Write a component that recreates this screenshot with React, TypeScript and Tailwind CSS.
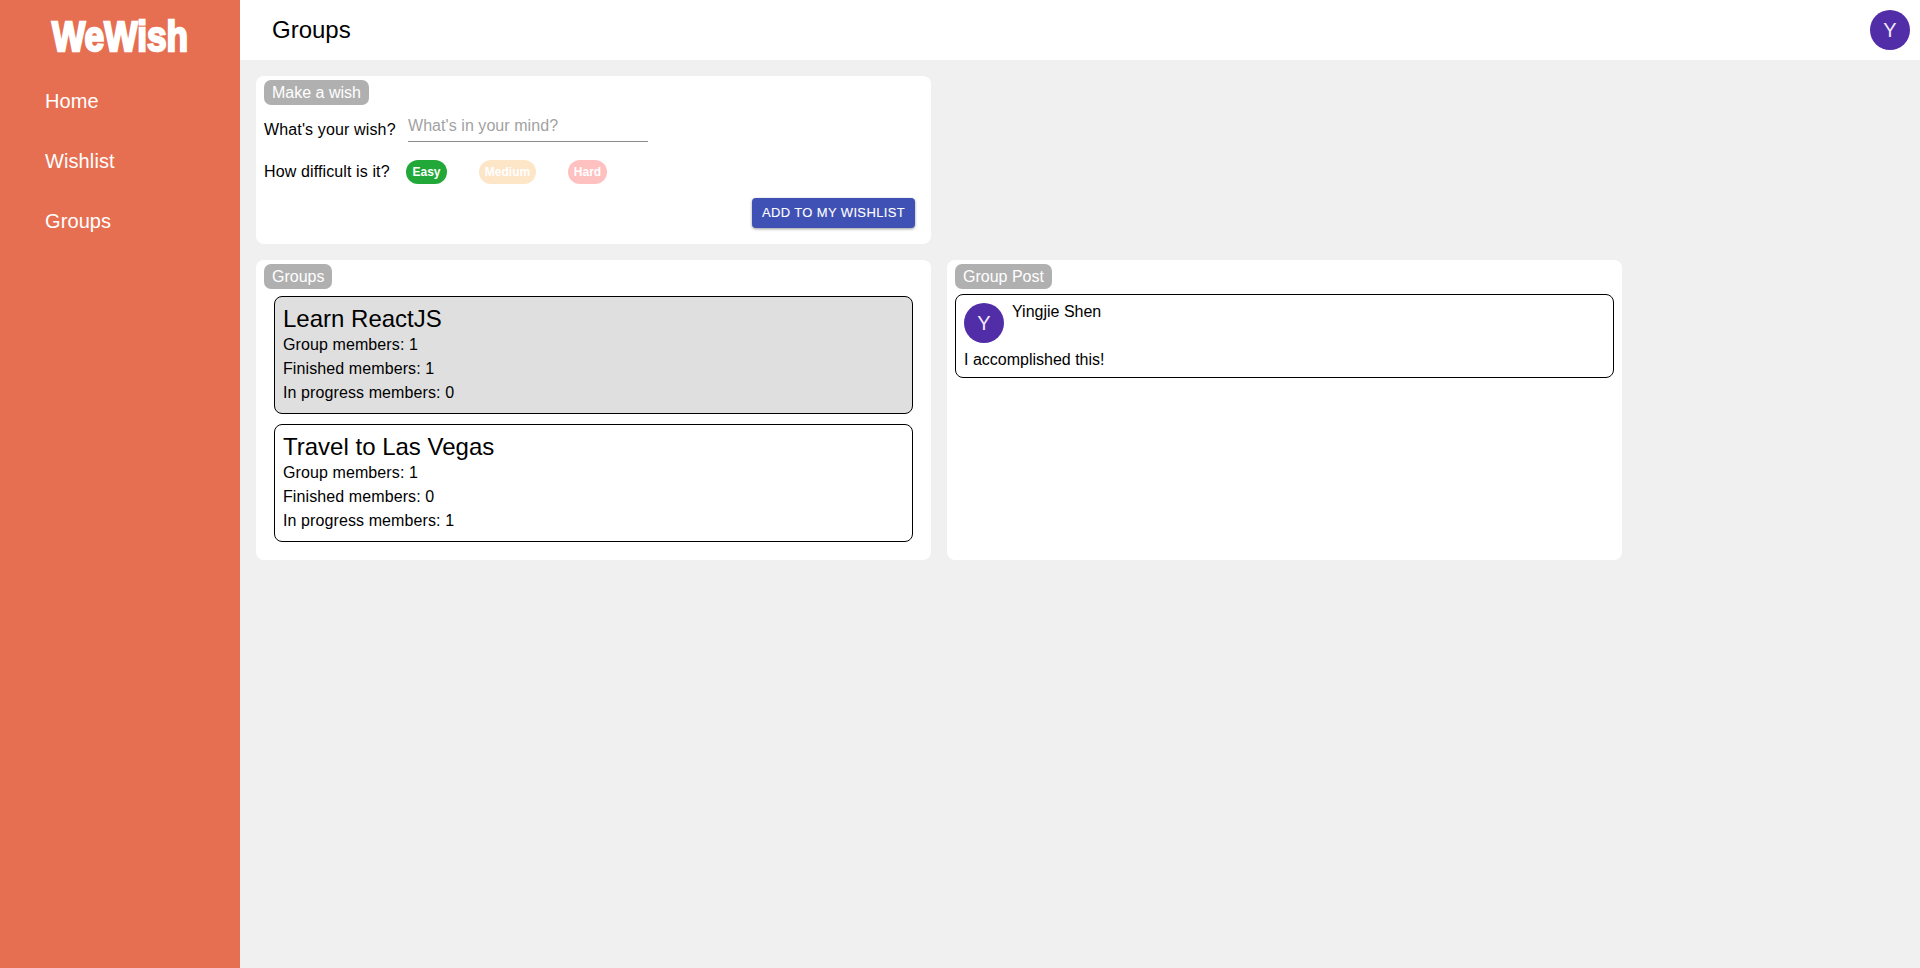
const font = "font-['Liberation_Sans',Arial,sans-serif]";

function Badge({ children }: { children: React.ReactNode }) {
  return (
    <div className="w-fit h-[25px] rounded-[7px] bg-[#b0b0b0] px-2 text-base leading-[25px] text-white">
      {children}
    </div>
  );
}

function Avatar() {
  return (
    <div className="flex h-10 w-10 shrink-0 items-center justify-center rounded-full bg-[#512da8] text-xl text-[#f0e9fa]">
      Y
    </div>
  );
}

function Chip({ label, className }: { label: string; className: string }) {
  return (
    <div className={`flex h-6 items-center justify-center rounded-full text-xs font-bold text-white ${className}`}>
      {label}
    </div>
  );
}

function GroupCard({ title, members, finished, progress, active }: { title: string; members: number; finished: number; progress: number; active?: boolean }) {
  return (
    <div className={`h-[118px] w-[639px] rounded-lg border border-black pl-2 pt-[7px] ${active ? "bg-[#dfdfdf]" : "bg-white"}`}>
      <div className="text-2xl leading-[29px] text-black">{title}</div>
      <div className="text-base leading-6 tracking-[0.1px] text-black">Group members: {members}</div>
      <div className="text-base leading-6 tracking-[0.1px] text-black">Finished members: {finished}</div>
      <div className="text-base leading-6 tracking-[0.1px] text-black">In progress members: {progress}</div>
    </div>
  );
}

export default function App() {
  return (
    <div className={`flex min-h-screen bg-[#f0f0f0] ${font}`}>
      <aside className="w-[240px] shrink-0 bg-[#e76f51]">
        <div className="flex h-[71px] items-center justify-center pt-[2px]">
          <span className="scale-x-[0.82] text-[43px] font-bold leading-none text-white [-webkit-text-stroke:2.4px_white]">
            WeWish
          </span>
        </div>
        <nav className="flex flex-col">
          {["Home", "Wishlist", "Groups"].map((n) => (
            <div key={n} className="flex h-[60px] items-center pl-[45px] text-xl tracking-[0.1px] text-white">
              {n}
            </div>
          ))}
        </nav>
      </aside>
      <main className="flex min-w-0 flex-1 flex-col">
        <header className="flex h-[60px] items-center justify-between bg-white pl-[32px] pr-[10px]">
          <h1 className="text-2xl text-black">Groups</h1>
          <Avatar />
        </header>
        <div className="flex flex-col gap-4 p-4">
          <section className="h-[168px] w-[675px] rounded-lg bg-white px-2 pt-1">
            <Badge>Make a wish</Badge>
            <div className="mt-[6px] flex items-end">
              <label className="w-[144px] text-base leading-6 tracking-[0.14px] text-black">What's your wish?</label>
              <input
                readOnly
                placeholder="What's in your mind?"
                className="h-[31px] w-[240px] border-b border-[#8c8c8c] pb-[1px] text-base tracking-[0.06px] text-black outline-none placeholder:text-[#a2a2a2]"
              />
            </div>
            <div className="mt-[18px] flex items-center">
              <div className="w-[142px] text-base leading-6 tracking-[0.12px] text-black">How difficult is it?</div>
              <div className="flex gap-8">
                <Chip label="Easy" className="w-[41px] bg-[#22a838]" />
                <Chip label="Medium" className="w-[57px] bg-[#fde5c8]" />
                <Chip label="Hard" className="w-[39px] bg-[#ffc0c0]" />
              </div>
            </div>
            <div className="mt-[14px] flex justify-end pr-2">
              <button className="h-[30px] w-[163px] rounded bg-[#3f51b5] text-[13px] font-medium tracking-[0.37px] text-white shadow-[0_1px_3px_rgba(0,0,0,0.4)] [-webkit-text-stroke:0.1px_white]">
                ADD TO MY WISHLIST
              </button>
            </div>
          </section>
          <div className="flex gap-4">
            <section className="h-[300px] w-[675px] rounded-lg bg-white px-2 pt-1">
              <Badge>Groups</Badge>
              <div className="ml-[10px] mt-[7px] flex flex-col gap-[10px]">
                <GroupCard title="Learn ReactJS" members={1} finished={1} progress={0} active />
                <GroupCard title="Travel to Las Vegas" members={1} finished={0} progress={1} />
              </div>
            </section>
            <section className="h-[300px] w-[675px] rounded-lg bg-white px-2 pt-1">
              <Badge>Group Post</Badge>
              <div className="mt-[5px] h-[84px] w-[659px] rounded-lg border border-black px-2 pt-2">
                <div className="flex gap-2">
                  <Avatar />
                  <div className="text-base leading-[18px] text-black">Yingjie Shen</div>
                </div>
                <div className="mt-[5px] text-base leading-6 text-black">I accomplished this!</div>
              </div>
            </section>
          </div>
        </div>
      </main>
    </div>
  );
}
